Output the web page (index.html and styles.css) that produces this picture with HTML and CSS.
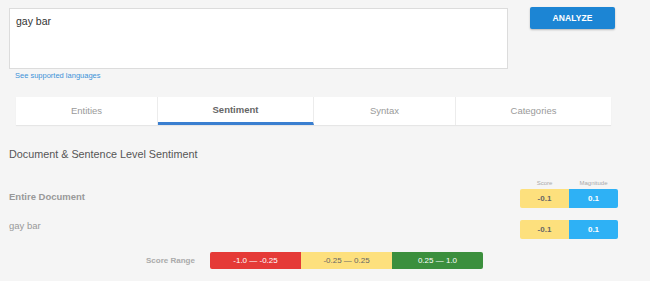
FILE: index.html
```html
<!DOCTYPE html>
<html>
<head>
<meta charset="utf-8">
<link rel="stylesheet" href="styles.css">
</head>
<body>
<div class="page">
  <div class="top">
    <div class="input-col">
      <div class="textbox">gay bar</div>
      <a class="langs">See supported languages</a>
    </div>
    <button class="analyze">ANALYZE</button>
  </div>

  <nav class="tabs">
    <div class="tab t1">Entities</div>
    <div class="tab t2 active">Sentiment</div>
    <div class="tab t3">Syntax</div>
    <div class="tab t4">Categories</div>
  </nav>

  <h2 class="heading">Document &amp; Sentence Level Sentiment</h2>

  <div class="results">
    <div class="labels">
      <span class="lab">Score</span>
      <span class="lab">Magnitude</span>
    </div>
    <div class="row">
      <span class="rowname strong">Entire Document</span>
      <div class="boxes">
        <span class="box score">-0.1</span>
        <span class="box mag">0.1</span>
      </div>
    </div>
    <div class="row row2">
      <span class="rowname">gay bar</span>
      <div class="boxes">
        <span class="box score">-0.1</span>
        <span class="box mag">0.1</span>
      </div>
    </div>
  </div>

  <div class="range">
    <span class="range-label">Score Range</span>
    <span class="seg neg">-1.0 — -0.25</span>
    <span class="seg neu">-0.25 — 0.25</span>
    <span class="seg pos">0.25 — 1.0</span>
  </div>
</div>
</body>
</html>
```

FILE: styles.css
```css
html, body {
  margin: 0;
  padding: 0;
  background: #f5f5f5;
  font-family: "Liberation Sans", Arial, sans-serif;
}
.page {
  width: 650px;
  height: 281px;
  overflow: hidden;
}
.top {
  display: flex;
  align-items: flex-start;
  padding: 8px 0 0 9px;
}
.input-col {
  display: flex;
  flex-direction: column;
}
.textbox {
  box-sizing: border-box;
  width: 499px;
  height: 61px;
  background: #fff;
  border: 1px solid #dcdcdc;
  padding: 6px 6px;
  font-size: 10.5px;
  color: #333;
}
.langs {
  margin: 2px 0 0 6px;
  font-size: 7.5px;
  line-height: 10px;
  color: #3d93d8;
}
.analyze {
  margin: -1px 0 0 22px;
  width: 85px;
  height: 22px;
  border: none;
  border-radius: 2px;
  background: #1c85d4;
  color: #fff;
  font-family: "Liberation Sans", Arial, sans-serif;
  font-weight: bold;
  font-size: 8.5px;
  letter-spacing: 0.1px;
  box-shadow: 0 1px 2px rgba(0,0,0,0.25);
  padding: 0;
}
.tabs {
  display: flex;
  margin: 16px 0 0 16px;
  width: 595px;
  height: 28px;
  background: #fff;
  box-shadow: 0 1px 1px rgba(0,0,0,0.06);
}
.tab {
  box-sizing: border-box;
  display: flex;
  align-items: center;
  justify-content: center;
  height: 28px;
  font-size: 9.5px;
  color: #9a9a9a;
  border-right: 1px solid #ececec;
  padding-bottom: 2px;
}
.t1 { width: 142px; }
.t2 { width: 156px; }
.t3 { width: 142px; }
.t4 { width: 155px; border-right: none; }
.tab.active {
  color: #666;
  font-weight: bold;
  border-bottom: 3px solid #3a7fd0;
  padding-bottom: 0;
}
.heading {
  margin: 22px 0 0 9px;
  font-size: 10.8px;
  font-weight: normal;
  color: #555;
  line-height: 14px;
}
.results {
  width: 618px;
  margin-top: 19px;
}
.labels {
  display: flex;
  justify-content: flex-end;
  height: 7px;
}
.lab {
  width: 49px;
  text-align: center;
  font-size: 6px;
  line-height: 7px;
  color: #aaa;
}
.row {
  display: flex;
  justify-content: space-between;
  align-items: flex-start;
  padding-left: 9px;
  margin-top: 2px;
}
.row2 { margin-top: 12px; }
.rowname {
  font-size: 9.5px;
  line-height: 11px;
  color: #999;
  padding-top: 2px;
}
.row2 .rowname { padding-top: 0; }
.rowname.strong { font-weight: bold; }
.boxes {
  display: flex;
}
.box {
  width: 49px;
  height: 19px;
  display: flex;
  align-items: center;
  justify-content: center;
  font-size: 8px;
  font-weight: bold;
}
.score {
  background: #fde07d;
  color: #666;
  border-radius: 2px 0 0 2px;
}
.mag {
  background: #2eb1f5;
  color: #fff;
  border-radius: 0 2px 2px 0;
}
.range {
  display: flex;
  align-items: center;
  margin: 13px 0 0 146px;
}
.range-label {
  width: 64px;
  font-size: 8px;
  font-weight: bold;
  color: #aaa;
}
.seg {
  width: 91px;
  height: 17px;
  display: flex;
  align-items: center;
  justify-content: center;
  font-size: 8px;
}
.neg { background: #e53a37; color: #fff; border-radius: 2px 0 0 2px; }
.neu { background: #fde07d; color: #666; }
.pos { background: #3b8f3d; color: #fff; border-radius: 0 2px 2px 0; }
```
